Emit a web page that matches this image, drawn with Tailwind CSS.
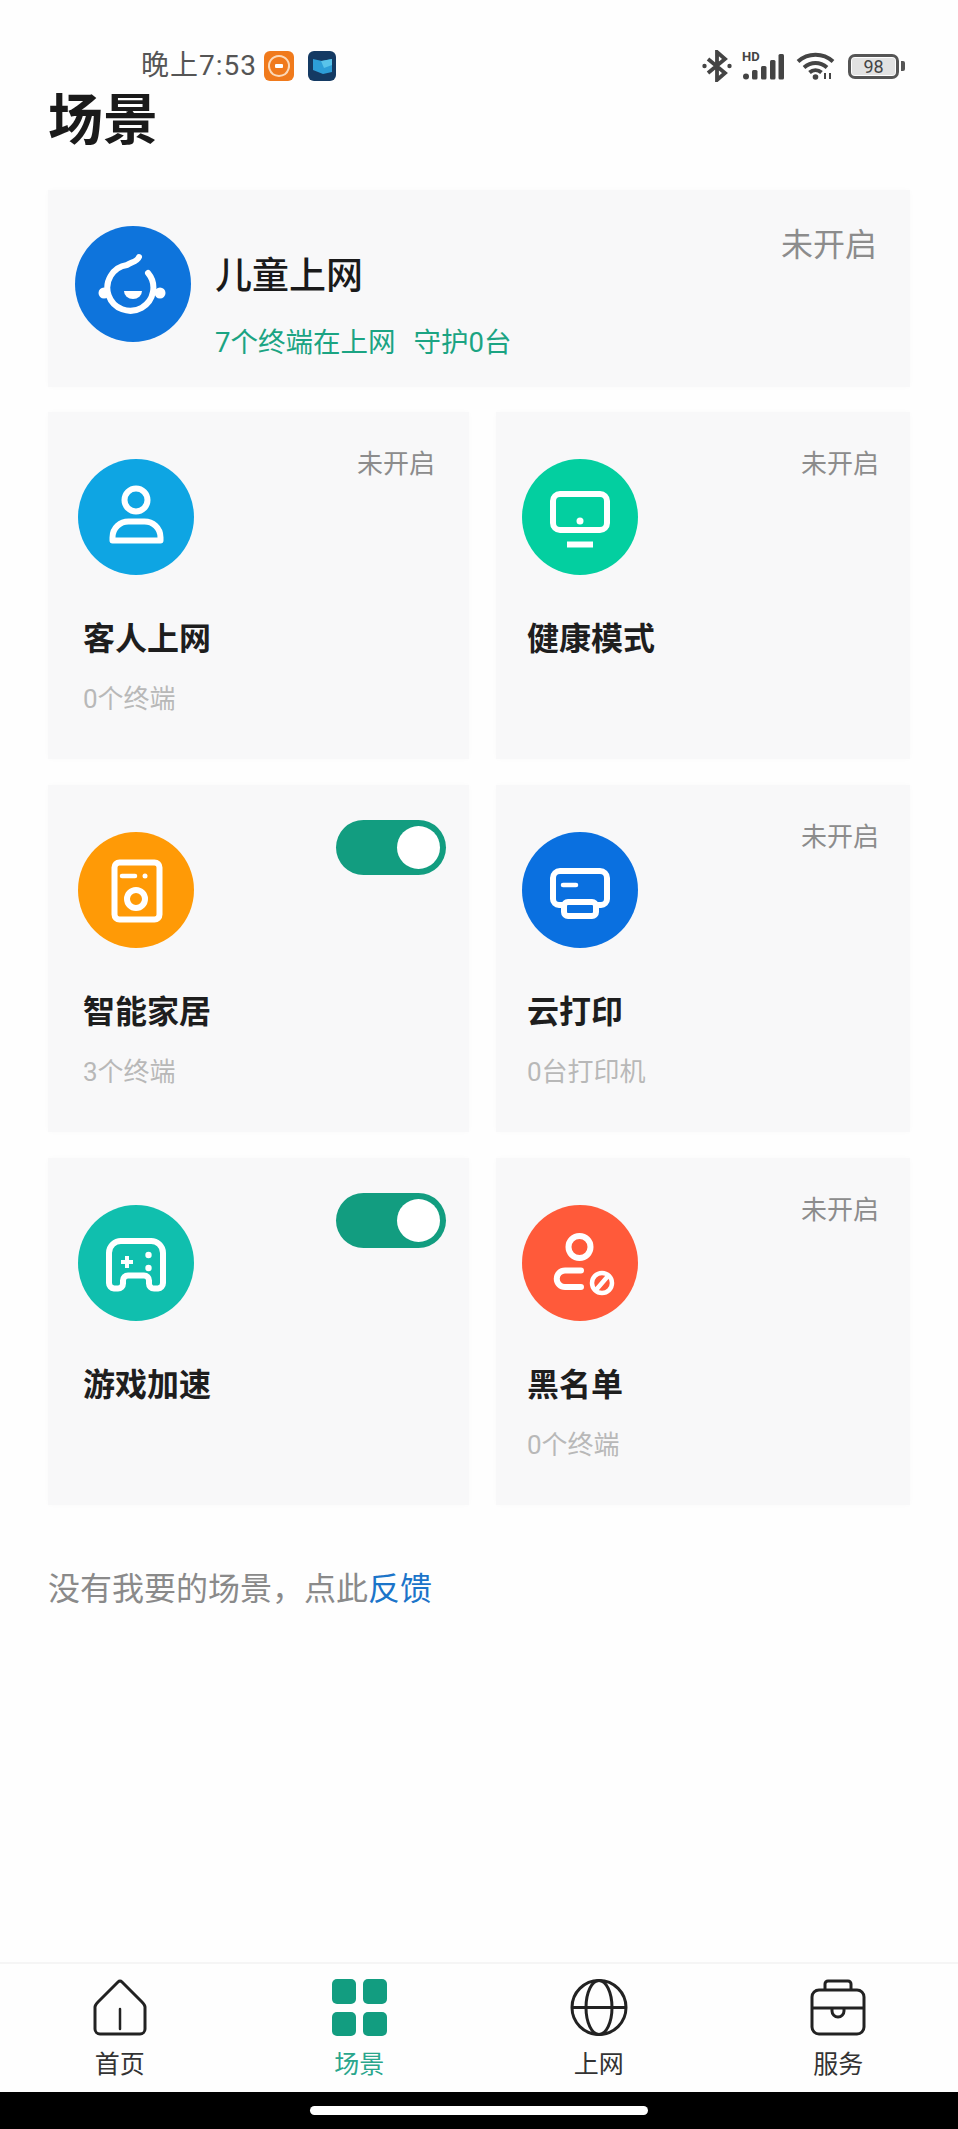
<!DOCTYPE html>
<html lang="zh-CN">
<head>
    <meta charset="UTF-8">
    <meta name="viewport" content="width=device-width, initial-scale=1.0">
    <title>场景</title>
    <script src="https://cdn.jsdelivr.net/npm/@tailwindcss/browser@4"></script>
</head>
<body class="bg-[#fefefe]">
<div class="w-[958px] h-[2129px] flex flex-col overflow-hidden bg-[#fefefe] font-['Roboto','Noto_Sans_CJK_SC',sans-serif]">

    <!-- status bar -->
    <div class="h-[93px] pt-[39px] pl-[141px] pr-[53px] flex items-center">
        <span class="text-[28px] leading-[54px] tracking-[1px] text-[#555]">晚上7:53</span>
        <div class="ml-[7px] w-[30px] h-[30px] rounded-[6px] bg-[#f07a1c] flex items-center justify-center">
            <svg class="w-[26px] h-[26px]" viewBox="0 0 26 26" fill="none"><path d="M3.500 16a10 10 0 1 1 19 0M22.500 16a10 10 0 0 1-19 0" stroke="#fbd9b8" stroke-width="2"/><rect x="9" y="11" width="8" height="4" rx="1" fill="#fff"/></svg>
        </div>
        <div class="ml-[14px] w-[28px] h-[30px] rounded-[6px] bg-[#143a63] flex items-center justify-center">
            <svg class="w-[21px] h-[21px]" viewBox="0 0 21 21"><path d="M1 3l9 2 10-2v13l-9 2-10-4z" fill="#2d9ed8"/><path d="M9 5l11-2v6l-8 3z" fill="#59c3ea"/></svg>
        </div>
        <svg class="ml-auto w-[30px] h-[32px]" viewBox="0 0 30 32" fill="none" stroke="#444" stroke-width="3.800"><path d="M6 9l17 14-8 7V2l8 7L6 23"/><circle cx="2.500" cy="16" r="2.200" fill="#444" stroke="none"/><circle cx="27.500" cy="16" r="2.200" fill="#444" stroke="none"/></svg>
        <div class="ml-[10px] relative w-[42px] h-[27px]">
            <span class="absolute left-0 top-[-3px] text-[13px] leading-[13px] font-bold text-[#444]">HD</span>
            <svg class="absolute inset-0 w-[42px] h-[27px]" viewBox="0 0 42 27" fill="#444"><circle cx="4" cy="23.500" r="3"/><rect x="10" y="17" width="5.500" height="9.500" rx="1.500"/><rect x="19" y="13" width="5.500" height="13.500" rx="1.500"/><rect x="28" y="7" width="5.500" height="19.500" rx="1.500"/><rect x="36.500" y="1" width="5.500" height="25.500" rx="1.500"/></svg>
        </div>
        <svg class="ml-[12px] w-[39px] h-[28px]" viewBox="0 0 39 28" fill="none" stroke="#444" stroke-width="4"><path d="M2 9.500c10-9 25-9 35 0"/><path d="M8 15.500c7-6 16-6 23 0"/><path d="M13.500 20.500c3.500-3 8.500-3 12 0"/><circle cx="19.500" cy="25" r="2.800" fill="#444" stroke="none"/><path d="M29 21v6M34 21v6" stroke-width="2"/></svg>
        <div class="ml-[13px] flex items-center">
            <div class="w-[51px] h-[25px] rounded-[7px] border-[3px] border-[#555] p-[1px] flex">
                <span class="w-full bg-[#e2e2e2] rounded-[2px] text-center text-[18px] leading-[17px] text-[#444]">98</span>
            </div>
            <div class="ml-[2px] w-[4px] h-[10px] rounded-r-[2px] bg-[#555]"></div>
        </div>
    </div>

    <div class="px-[48px]">
        <h1 class="pt-[2px] text-[55px] leading-[50px] font-bold text-[#1a1a1a]">场景</h1>

        <!-- 儿童上网 -->
        <div class="mt-[45px] h-[197px] bg-[#f8f8f9] flex items-start pl-[27px] pr-[33px] pt-[36px] shadow-[0_0_6px_rgba(0,0,0,0.02)]">
            <div class="w-[116px] h-[116px] rounded-full bg-[#0e74dc] shrink-0">
                <svg class="w-[116px] h-[116px]" viewBox="0 0 116 116" fill="none" stroke="#fff" stroke-width="6" stroke-linecap="round"><path d="M64 31c-2 5-8 5-12 8a23 23 0 1 0 21 8"/><circle cx="29" cy="67" r="5.500" fill="#fff" stroke="none"/><circle cx="85" cy="67" r="5.500" fill="#fff" stroke="none"/><path d="M49 65h18a9 8 0 0 1-18 0z" fill="#fff" stroke="none"/></svg>
            </div>
            <div class="ml-[24px]">
                <div class="mt-[28px] text-[37px] leading-[46px] font-medium text-[#1a1a1a]">儿童上网</div>
                <div class="mt-[25px] text-[27.500px] leading-[36px] text-[#1ba483]">7个终端在上网<span class="ml-[18px]">守护0台</span></div>
            </div>
            <span class="ml-auto mt-[-1px] text-[32px] leading-[40px] text-[#8c8c8c]">未开启</span>
        </div>

        <!-- scene cards -->
        <div class="mt-[25px] grid grid-cols-[421px_414px] gap-x-[27px] gap-y-[26px]">

            <div class="h-[347px] bg-[#f8f8f9] pt-[37px] pl-[30px] pr-[34px] shadow-[0_0_6px_rgba(0,0,0,0.02)]">
                <div class="flex items-start justify-between">
                    <div class="mt-[10px] w-[116px] h-[116px] rounded-full bg-[#0ea5e3]">
                        <svg class="w-[116px] h-[116px]" viewBox="0 0 116 116" fill="none" stroke="#fff" stroke-width="6" stroke-linejoin="round"><circle cx="58" cy="41" r="11.500"/><path d="M34.500 81.500h48v-3c0-10-8-16-16-16h-16c-8 0-16 6-16 16z"/></svg>
                    </div>
                    <span class="text-[26px] leading-[30px] text-[#8c8c8c]">未开启</span>
                </div>
                <div class="ml-[5px] mt-[44px] text-[32px] leading-[40px] font-bold text-[#1e1e1e]">客人上网</div>
                <div class="ml-[5px] mt-[24px] text-[26px] leading-[32px] text-[#b8b8b8]">0个终端</div>
            </div>

            <div class="h-[347px] bg-[#f8f8f9] pt-[37px] pl-[26px] pr-[31px] shadow-[0_0_6px_rgba(0,0,0,0.02)]">
                <div class="flex items-start justify-between">
                    <div class="mt-[10px] w-[116px] h-[116px] rounded-full bg-[#03cfa0]">
                        <svg class="w-[116px] h-[116px]" viewBox="0 0 116 116" fill="none" stroke="#fff" stroke-width="6"><rect x="31" y="35" width="54" height="36" rx="7"/><path d="M45 85.500h26"/><circle cx="58" cy="62" r="3.500" fill="#fff" stroke="none"/></svg>
                    </div>
                    <span class="text-[26px] leading-[30px] text-[#8c8c8c]">未开启</span>
                </div>
                <div class="ml-[5px] mt-[44px] text-[32px] leading-[40px] font-bold text-[#1e1e1e]">健康模式</div>
            </div>

            <div class="h-[347px] bg-[#f8f8f9] pt-[37px] pl-[30px] pr-[34px] shadow-[0_0_6px_rgba(0,0,0,0.02)]">
                <div class="flex items-start justify-between">
                    <div class="mt-[10px] w-[116px] h-[116px] rounded-full bg-[#ff9a06]">
                        <svg class="w-[116px] h-[116px]" viewBox="0 0 116 116" fill="none" stroke="#fff" stroke-width="6"><rect x="36.500" y="30.500" width="45" height="57" rx="5"/><circle cx="58" cy="67" r="9"/><path d="M44 44h13" stroke-width="4.500" stroke-linecap="round"/><circle cx="67" cy="44" r="2.500" fill="#fff" stroke="none"/></svg>
                    </div>
                    <div class="mt-[-2px] mr-[-11px] w-[110px] h-[55px] rounded-full bg-[#129d80] flex items-center justify-end pr-[6px]">
                        <div class="w-[43px] h-[43px] rounded-full bg-white"></div>
                    </div>
                </div>
                <div class="ml-[5px] mt-[44px] text-[32px] leading-[40px] font-bold text-[#1e1e1e]">智能家居</div>
                <div class="ml-[5px] mt-[24px] text-[26px] leading-[32px] text-[#b8b8b8]">3个终端</div>
            </div>

            <div class="h-[347px] bg-[#f8f8f9] pt-[37px] pl-[26px] pr-[31px] shadow-[0_0_6px_rgba(0,0,0,0.02)]">
                <div class="flex items-start justify-between">
                    <div class="mt-[10px] w-[116px] h-[116px] rounded-full bg-[#0a70e0]">
                        <svg class="w-[116px] h-[116px]" viewBox="0 0 116 116" fill="none" stroke="#fff" stroke-width="6"><path d="M41 73h-4a6 6 0 0 1-6-6v-21a7 7 0 0 1 7-7h40a7 7 0 0 1 7 7v21a6 6 0 0 1-6 6h-4"/><rect x="42" y="70" width="32" height="14" rx="4"/><path d="M41 53h13" stroke-width="4.500" stroke-linecap="round"/></svg>
                    </div>
                    <span class="text-[26px] leading-[30px] text-[#8c8c8c]">未开启</span>
                </div>
                <div class="ml-[5px] mt-[44px] text-[32px] leading-[40px] font-bold text-[#1e1e1e]">云打印</div>
                <div class="ml-[5px] mt-[24px] text-[26px] leading-[32px] text-[#b8b8b8]">0台打印机</div>
            </div>

            <div class="h-[347px] bg-[#f8f8f9] pt-[37px] pl-[30px] pr-[34px] shadow-[0_0_6px_rgba(0,0,0,0.02)]">
                <div class="flex items-start justify-between">
                    <div class="mt-[10px] w-[116px] h-[116px] rounded-full bg-[#10bfae]">
                        <svg class="w-[116px] h-[116px]" viewBox="0 0 116 116" fill="none" stroke="#fff" stroke-width="6"><path d="M44 36h28a12 12 0 0 1 13 12v30a5.500 5.500 0 0 1-5 5.500h-4a5 5 0 0 1-5-5v-3a5 5 0 0 0-5-5h-16a5 5 0 0 0-5 5v3a5 5 0 0 1-5 5h-4a5.500 5.500 0 0 1-5-5.500v-30a12 12 0 0 1 13-12z"/><path d="M43 57h12M49 51v12" stroke-width="4"/><circle cx="70.500" cy="50" r="3.200" fill="#fff" stroke="none"/><circle cx="70.500" cy="63" r="3.200" fill="#fff" stroke="none"/></svg>
                    </div>
                    <div class="mt-[-2px] mr-[-11px] w-[110px] h-[55px] rounded-full bg-[#129d80] flex items-center justify-end pr-[6px]">
                        <div class="w-[43px] h-[43px] rounded-full bg-white"></div>
                    </div>
                </div>
                <div class="ml-[5px] mt-[44px] text-[32px] leading-[40px] font-bold text-[#1e1e1e]">游戏加速</div>
            </div>

            <div class="h-[347px] bg-[#f8f8f9] pt-[37px] pl-[26px] pr-[31px] shadow-[0_0_6px_rgba(0,0,0,0.02)]">
                <div class="flex items-start justify-between">
                    <div class="mt-[10px] w-[116px] h-[116px] rounded-full bg-[#ff5a3a]">
                        <svg class="w-[116px] h-[116px]" viewBox="0 0 116 116" fill="none" stroke="#fff" stroke-width="6" stroke-linecap="round"><circle cx="57.500" cy="42" r="11"/><path d="M59 65.500h-16a8.250 8.250 0 0 0 0 16.500h16"/><circle cx="80" cy="78" r="10" stroke-width="4.500"/><path d="M74 85l12-14" stroke-width="4.500"/></svg>
                    </div>
                    <span class="text-[26px] leading-[30px] text-[#8c8c8c]">未开启</span>
                </div>
                <div class="ml-[5px] mt-[44px] text-[32px] leading-[40px] font-bold text-[#1e1e1e]">黑名单</div>
                <div class="ml-[5px] mt-[24px] text-[26px] leading-[32px] text-[#b8b8b8]">0个终端</div>
            </div>
        </div>

        <p class="mt-[64px] text-[32px] leading-[40px] text-[#8a8a8a]">没有我要的场景&#65292;点此<span class="text-[#1b74c9]">反馈</span></p>
    </div>

    <!-- bottom nav -->
    <nav class="mt-auto h-[130px] border-t-[2px] border-[#f5f5f5] pt-[15px] grid grid-cols-4">
        <div class="flex flex-col items-center">
            <svg class="w-[56px] h-[57px]" viewBox="0 0 56 57" fill="none" stroke="#222" stroke-width="3" stroke-linejoin="round" stroke-linecap="round"><path d="M28 2c-1 0-2 1-2 1l-20 20c-1 1-3 3-3 5v22a5 5 0 0 0 5 5h40a5 5 0 0 0 5-5v-22c0-2-2-4-3-5l-20-20s-1-1-2-1z"/><path d="M28 30v20" stroke-width="2.500"/></svg>
            <span class="mt-[14px] text-[25px] leading-[30px] text-[#333]">首页</span>
        </div>
        <div class="flex flex-col items-center">
            <div class="w-[55px] h-[57px] grid grid-cols-2 gap-x-[7px] gap-y-[8px]">
                <div class="rounded-[5px] bg-[#129d80]"></div>
                <div class="rounded-[5px] bg-[#129d80]"></div>
                <div class="rounded-[5px] bg-[#129d80]"></div>
                <div class="rounded-[5px] bg-[#129d80]"></div>
            </div>
            <span class="mt-[14px] text-[25px] leading-[30px] text-[#2aa68c]">场景</span>
        </div>
        <div class="flex flex-col items-center">
            <svg class="w-[58px] h-[57px]" viewBox="0 0 58 57" fill="none" stroke="#222" stroke-width="3"><ellipse cx="29" cy="28.500" rx="27" ry="27"/><ellipse cx="29" cy="28.500" rx="13" ry="27"/><path d="M2 28.500h54"/></svg>
            <span class="mt-[14px] text-[25px] leading-[30px] text-[#333]">上网</span>
        </div>
        <div class="flex flex-col items-center">
            <svg class="w-[56px] h-[57px]" viewBox="0 0 56 57" fill="none" stroke="#222" stroke-width="3" stroke-linejoin="round"><rect x="2" y="11" width="52" height="44" rx="7"/><path d="M15 11V5a3 3 0 0 1 3-3h20a3 3 0 0 1 3 3v6"/><path d="M2 29h52"/><path d="M22 29v3a6 6 0 0 0 12 0v-3"/></svg>
            <span class="mt-[14px] text-[25px] leading-[30px] text-[#333]">服务</span>
        </div>
    </nav>

    <div class="h-[37px] shrink-0 bg-black flex items-center justify-center">
        <div class="w-[338px] h-[9px] rounded-full bg-white"></div>
    </div>
</div>
</body>
</html>
